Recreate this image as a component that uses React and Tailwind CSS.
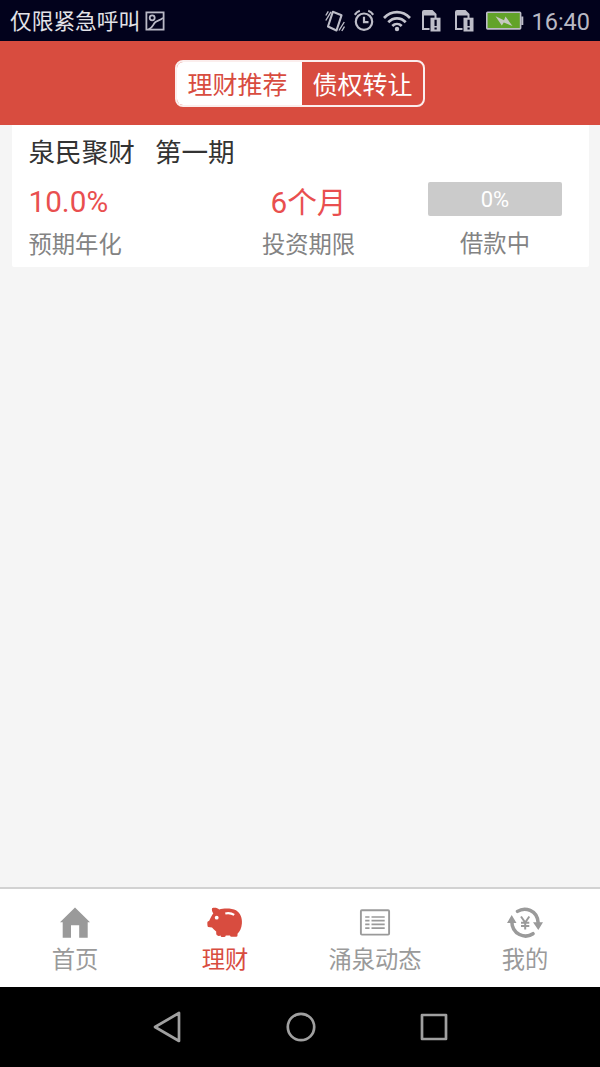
import React, { useState } from 'react'

const PictureIcon = () => (
    <svg width="20" height="20" viewBox="0 0 20 20" fill="none" stroke="#b9b9c6" strokeWidth="1.8">
        <rect x="1.4" y="1.4" width="17.2" height="17.2" />
        <circle cx="7.2" cy="6.8" r="2.5" />
        <path d="M3.5 18.5C9 15.5 7.5 13.5 10.5 11C13 9 15 9.5 18 6.8" />
    </svg>
)

const VibrateIcon = () => (
    <svg width="20" height="24" viewBox="0 0 20 24" fill="none" stroke="#bdbdc8">
        <path d="M7.8 2.8L16.5 6.3L11.5 21.5L3 17.5Z" strokeWidth="2.1" strokeLinejoin="round" />
        <path d="M0.8 6.5L3.3 2.3M0.8 11.5L6 2.8M14 21.5L19.3 13M16.8 22L19.5 17.5" strokeWidth="1.4" />
    </svg>
)

const AlarmIcon = () => (
    <svg width="20" height="24" viewBox="0 0 20 24" fill="none" stroke="#bdbdc8" strokeWidth="2.2">
        <circle cx="10" cy="12.7" r="8.2" />
        <path d="M10 7.8V13.2H14.5" />
        <path d="M0.8 5.8C2.2 3.6 3.5 2.6 5.8 1.8M19.2 5.8C17.8 3.6 16.5 2.6 14.2 1.8" />
    </svg>
)

const WifiIcon = () => (
    <svg width="28" height="24" viewBox="0 0 28 24" fill="none" stroke="#c3c3cd" strokeWidth="2.7">
        <path d="M1 9C8.5 1.2 19.5 1.2 27 9" />
        <path d="M5.3 13.2C10.3 8 17.7 8 22.7 13.2" />
        <path d="M9.3 17C12 14.3 16 14.3 18.7 17" />
        <circle cx="14" cy="20" r="2.2" fill="#c3c3cd" stroke="none" />
    </svg>
)

const SimCardIcon = () => (
    <svg width="20" height="24" viewBox="0 0 20 24">
        <path d="M0 3Q0 1 2 1H10.5L14.5 5V9H12.5V6.5H2V19H7.5V21H0Z" fill="#bdbdc8" />
        <rect x="8.5" y="8.7" width="10" height="13.8" fill="#bdbdc8" />
        <path d="M12.5 10.7H14.7V17H12.5ZM12.5 18.5H14.7V20.5H12.5Z" fill="#02021c" />
    </svg>
)

const BatteryIcon = () => (
    <svg width="38" height="20" viewBox="0 0 38 20">
        <rect x="0.8" y="1.3" width="33.8" height="16.6" rx="0.8" fill="#62a329" stroke="#bdbdc8" strokeWidth="1.6" />
        <path d="M35.3 5.5H37.3V14H35.3Z" fill="#bdbdc8" />
        <path d="M9.5 5.3L18 9.2L19.5 5.5L26.5 15L17.8 11.5L15.8 14.5Z" fill="#c6c9c2" />
    </svg>
)

const HomeIcon = () => (
    <svg width="36" height="34" viewBox="0 0 36 34" fill="currentColor">
        <path d="M18 1.5L33 16.2H30.7V31.7H22.2V19.2H14V31.7H5.7V16.2H3Z" />
    </svg>
)

const PiggyIcon = () => (
    <svg width="36" height="34" viewBox="0 0 36 34">
        <path
            d="M5 2.2C7.5 1.4 10.5 1.8 12.2 3.4C17 1.9 25 2 29 4.3C33.5 7 35.4 12.500 34.9 17.500C34.500 22 33 25.500 30.500 27.800V29.500Q30.500 30.800 29 30.800H24.500Q23.200 30.800 23 29.500H18.800Q18.500 31 17 31H15Q13.600 31 13.600 29.500Q12.500 30.300 11 29.800Q9.200 29.300 9.200 27.500V25.500C7.500 24.200 6.200 23 5 21.500L1.200 21C0.300 20.700 0.200 16.500 0.500 15.700L2.200 14.800C3.200 12.500 4.800 9.500 6.300 7.300C5.200 6 4.600 4 5 2.200Z"
            fill="currentColor"
        />
        <circle cx="9.7" cy="11.7" r="1.9" fill="#fff" />
        <path d="M18.3 7.5C21.5 6.9 24.5 7.2 27.2 8.9" fill="none" stroke="#fff" strokeWidth="2.2" />
    </svg>
)

const ListIcon = () => (
    <svg width="36" height="34" viewBox="0 0 36 34" fill="none" stroke="currentColor">
        <rect x="3.9" y="4.2" width="28.2" height="24.4" rx="1" strokeWidth="1.9" />
        <path d="M8.2 11H12.5M8.2 14.7H12.5M8.2 18.4H12.5M8.2 22.1H12.5M14.5 11H27.7M14.5 14.7H27.7M14.5 18.4H27.7M14.5 22.1H27.7" strokeWidth="1.7" />
    </svg>
)

const MineIcon = () => (
    <svg width="36" height="34" viewBox="0 0 36 34" fill="none" stroke="currentColor">
        <path d="M10.5 5.4C17.500 0.8 30.500 3.500 31.200 17M26 27.700C18 33.200 5 28.500 4.800 15.500" strokeWidth="3.5" strokeLinecap="round" />
        <path d="M26 16.2H36L31.3 24ZM0 17L4.7 9L9.500 17Z" fill="currentColor" stroke="none" />
        <path d="M14 10.5L18.2 16.5L22.3 10.5M18.2 16V23.5M14 16.7H22.3M14 20H22.3" strokeWidth="2" />
    </svg>
)

const segments = ['理财推荐', '债权转让']

const navItems = [
    { label: '首页', icon: HomeIcon },
    { label: '理财', icon: PiggyIcon },
    { label: '涌泉动态', icon: ListIcon },
    { label: '我的', icon: MineIcon },
]

const StatusBar = () => (
    <div className="h-[41px] shrink-0 flex items-center justify-between bg-[#02021c] pl-[10px] pr-[10px]">
        <div className="flex items-center gap-[5px]">
            <span className="pt-[2px] text-[21.7px] leading-[30px] text-[#e3e3e8]">仅限紧急呼叫</span>
            <span className="flex pt-px"><PictureIcon /></span>
        </div>
        <div className="flex items-center">
            <VibrateIcon />
            <span className="ml-[9px] flex"><AlarmIcon /></span>
            <span className="ml-[9px] flex"><WifiIcon /></span>
            <span className="ml-[11px] flex"><SimCardIcon /></span>
            <span className="ml-[13px] flex"><SimCardIcon /></span>
            <span className="ml-[11px] flex"><BatteryIcon /></span>
            <span className="ml-[7px] pt-[2px] text-[23.5px] leading-[30px] text-[#b9b9c4]">16:40</span>
        </div>
    </div>
)

const Header = () => {
    const [active, setActive] = useState(0)

    return (
        <header className="h-[84px] shrink-0 flex justify-center bg-[#d84c3f] pt-[19px]">
            <div className="w-[250px] h-[47px] flex rounded-lg border-2 border-[#fbeeed] overflow-hidden">
                {segments.map((name, index) => (
                    <button
                        key={name}
                        onClick={() => setActive(index)}
                        className={`flex items-center justify-center pt-[4px] text-[25px] leading-[30px] ${
                            index === 0 ? 'w-[125px] pr-[4px]' : 'flex-1'
                        } ${active === index ? 'bg-white text-[#d84c3f]' : 'text-white'}`}
                    >
                        {name}
                    </button>
                ))}
            </div>
        </header>
    )
}

const ProductCard = () => (
    <div className="mx-[11.5px] h-[142px] rounded-b-xs bg-white pt-[10px] pl-[17px] pr-[26.5px]">
        {/* Title */}
        <div className="flex gap-5 text-[26.6px] leading-[36px] text-[#333]">
            <span>泉民聚财</span>
            <span>第一期</span>
        </div>

        {/* Figures */}
        <div className="flex mt-[11px]">
            <div className="w-[213px]">
                <div className="text-[29.7px] leading-[40px] text-[#e94f4f]">10.0%</div>
                <div className="mt-[5px] text-[23.3px] leading-[36px] text-[#838383]">预期年化</div>
            </div>
            <div className="w-[134px] text-center">
                <div className="text-[29.7px] leading-[42px] text-[#e94f4f]">6个月</div>
                <div className="mt-[3px] text-[23.3px] leading-[36px] text-[#838383]">投资期限</div>
            </div>
            <div className="w-[134px] ml-auto text-center">
                <div className="h-[34px] rounded-xs bg-[#cbcbcb] pt-px text-[22px] leading-[34px] text-white">0%</div>
                <div className="mt-[10px] text-[23.3px] leading-[36px] text-[#838383]">借款中</div>
            </div>
        </div>
    </div>
)

const BottomNav = () => {
    const [current, setCurrent] = useState(1)

    return (
        <nav className="h-[100px] shrink-0 grid grid-cols-4 border-t-2 border-[#d2d2d2] bg-white">
            {navItems.map(({ label, icon: Icon }, index) => (
                <button
                    key={label}
                    onClick={() => setCurrent(index)}
                    className={`flex flex-col items-center pt-[17px] ${
                        current === index ? 'text-[#d84c3f]' : 'text-[#9a9a9a]'
                    }`}
                >
                    <Icon />
                    <span className="mt-[2px] text-[23.3px] leading-[36px]">{label}</span>
                </button>
            ))}
        </nav>
    )
}

const SystemBar = () => (
    <div className="h-[80px] shrink-0 flex items-center justify-center gap-[101.5px] bg-black pl-px">
        <svg width="32" height="32" viewBox="0 0 32 32" fill="none" stroke="#a0a0a0" strokeWidth="2.7" strokeLinejoin="round">
            <path d="M4 16L28 2V30Z" />
        </svg>
        <svg width="32" height="32" viewBox="0 0 32 32" fill="none" stroke="#a0a0a0" strokeWidth="2.7">
            <circle cx="16" cy="16" r="13.2" />
        </svg>
        <svg width="32" height="32" viewBox="0 0 32 32" fill="none" stroke="#a0a0a0" strokeWidth="2.7" strokeLinejoin="round">
            <rect x="4" y="4" width="24" height="24" />
        </svg>
    </div>
)

const App = () => {
    return (
        <div className="w-[600px] h-[1067px] flex flex-col overflow-hidden bg-[#f5f5f5] font-[Roboto,'Noto_Sans_CJK_SC',sans-serif]">
            <StatusBar />
            <Header />
            <main className="flex-1">
                <ProductCard />
            </main>
            <BottomNav />
            <SystemBar />
        </div>
    )
}

export default App
